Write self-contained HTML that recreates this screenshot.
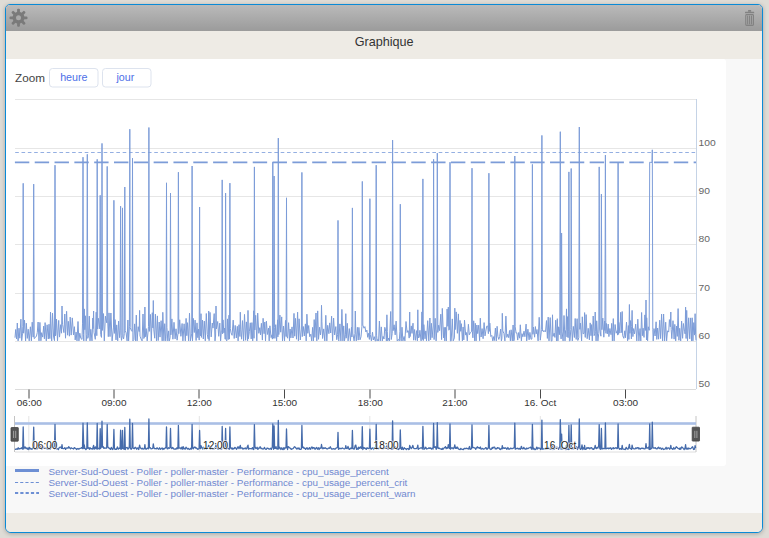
<!DOCTYPE html>
<html><head><meta charset="utf-8">
<style>
html,body{margin:0;padding:0;}
body{width:769px;height:538px;overflow:hidden;background:#dfdcd6;position:relative;font-family:"Liberation Sans",sans-serif;}
#panel{position:absolute;left:5px;top:4px;width:756px;height:527px;border:1px solid #0a8ad6;border-radius:5px 5px 6px 6px;overflow:hidden;background:#f8f8f8;box-shadow:0 1px 4px rgba(0,0,0,0.25);}
#hdr{position:absolute;left:0;top:0;width:756px;height:26px;background:linear-gradient(#bababa,#9b9b9b);}
#title{position:absolute;left:0;top:26px;width:756px;height:28px;background:#eeebe5;}
#box{position:absolute;left:0;top:54px;width:720px;height:407px;background:#fff;border-top-right-radius:3px;border-bottom-right-radius:3px;}
#foot{position:absolute;left:0;top:508px;width:756px;height:19px;background:#eeebe5;}
svg{position:absolute;left:0;top:0;}
</style></head><body>
<div id="panel">
 <div id="hdr"></div>
 <div id="title"></div>
 <div id="box"></div>
 <div id="foot"></div>
</div>
<svg width="769" height="538" viewBox="0 0 769 538" font-family="Liberation Sans, sans-serif">
 <!-- gear -->
 <g transform="translate(18.5,17.8)" fill="#7a7a7a">
  <circle r="6"/>
  <g id="teeth">
   <rect x="-1.4" y="-9" width="2.8" height="5" rx="1"/>
   <rect x="-1.4" y="-9" width="2.8" height="5" rx="1" transform="rotate(45)"/>
   <rect x="-1.4" y="-9" width="2.8" height="5" rx="1" transform="rotate(90)"/>
   <rect x="-1.4" y="-9" width="2.8" height="5" rx="1" transform="rotate(135)"/>
   <rect x="-1.4" y="-9" width="2.8" height="5" rx="1" transform="rotate(180)"/>
   <rect x="-1.4" y="-9" width="2.8" height="5" rx="1" transform="rotate(225)"/>
   <rect x="-1.4" y="-9" width="2.8" height="5" rx="1" transform="rotate(270)"/>
   <rect x="-1.4" y="-9" width="2.8" height="5" rx="1" transform="rotate(315)"/>
  </g>
  <circle r="2.5" fill="#a9a9a9"/>
 </g>
 <!-- trash -->
 <g fill="#828282">
  <rect x="748" y="10" width="3.2" height="1.8" rx="0.6"/>
  <rect x="745" y="11.8" width="9.2" height="1.5" rx="0.5"/>
  <rect x="745.75" y="14.6" width="7.7" height="10.8" rx="0.9" fill="none" stroke="#828282" stroke-width="1.1"/>
  <rect x="747.1" y="15.6" width="1.1" height="8.8"/>
  <rect x="749.05" y="15.6" width="1.1" height="8.8"/>
  <rect x="751" y="15.6" width="1.1" height="8.8"/>
 </g>
 <text x="384.2" y="46" font-size="12.6" fill="#333" text-anchor="middle">Graphique</text>
 <!-- zoom -->
 <text transform="translate(15,82) scale(1,0.9)" font-size="11.7" fill="#444">Zoom</text>
 <rect x="49.5" y="68.5" width="48.5" height="18.5" rx="3" fill="#fff" stroke="#dde3ee"/>
 <rect x="102.5" y="68.5" width="48.5" height="18.5" rx="3" fill="#fff" stroke="#dde3ee"/>
 <text x="73.8" y="81" font-size="10.7" fill="#4d6fe8" text-anchor="middle">heure</text>
 <text x="125.3" y="81" font-size="10.7" fill="#4d6fe8" text-anchor="middle">jour</text>
 <!-- grid -->
 <g stroke="#e6e6e6" stroke-width="1">
  <line x1="15" y1="99.5" x2="696" y2="99.5"/>
  <line x1="15" y1="148.5" x2="696" y2="148.5"/>
  <line x1="15" y1="196.5" x2="696" y2="196.5"/>
  <line x1="15" y1="244.5" x2="696" y2="244.5"/>
  <line x1="15" y1="293.5" x2="696" y2="293.5"/>
  <line x1="15" y1="341.5" x2="696" y2="341.5"/>
 </g>
 <line x1="15" y1="389.5" x2="696" y2="389.5" stroke="#dcdcdc"/>
 <line x1="696.5" y1="99" x2="696.5" y2="389" stroke="#c5d3e6"/>
 <g font-size="10" fill="#666">
  <text transform="translate(698.5,146.3) scale(1.03,0.88)">100</text>
  <text transform="translate(698.5,194) scale(1.03,0.88)">90</text>
  <text transform="translate(698.5,242.2) scale(1.03,0.88)">80</text>
  <text transform="translate(698.5,290.5) scale(1.03,0.88)">70</text>
  <text transform="translate(698.5,338.7) scale(1.03,0.88)">60</text>
  <text transform="translate(698.5,386.8) scale(1.03,0.88)">50</text>
 </g>
 <g stroke="#4a4a4a" stroke-width="1">
  <line x1="29" y1="389.5" x2="29" y2="398.5"/>
  <line x1="114" y1="389.5" x2="114" y2="398.5"/>
  <line x1="199" y1="389.5" x2="199" y2="398.5"/>
  <line x1="284.5" y1="389.5" x2="284.5" y2="398.5"/>
  <line x1="370" y1="389.5" x2="370" y2="398.5"/>
  <line x1="455" y1="389.5" x2="455" y2="398.5"/>
  <line x1="540.5" y1="389.5" x2="540.5" y2="398.5"/>
  <line x1="625.5" y1="389.5" x2="625.5" y2="398.5"/>
 </g>
 <g font-size="10" fill="#333" text-anchor="middle" transform="translate(0,405.7) scale(1,0.94)">
  <text x="29.3" y="0">06:00</text>
  <text x="114" y="0">09:00</text>
  <text x="199.3" y="0">12:00</text>
  <text x="284.7" y="0">15:00</text>
  <text x="370.3" y="0">18:00</text>
  <text x="454.8" y="0">21:00</text>
  <text x="540.3" y="0">16. Oct</text>
  <text x="625.6" y="0">03:00</text>
 </g>
 <!-- thresholds -->
 <line x1="15.2" y1="152.5" x2="696" y2="152.5" stroke="#94afe2" stroke-width="1" stroke-dasharray="3.62 2.701"/>
 <line x1="14.9" y1="162.4" x2="646" y2="162.4" stroke="#7c9cd8" stroke-width="1.8" stroke-dasharray="14.4 5.42"/>
 <line x1="654" y1="162.4" x2="696" y2="162.4" stroke="#7c9cd8" stroke-width="1.8" stroke-dasharray="14.4 5.42"/>
 <path d="M15.0 337.7 L15.7 329.5 L16.6 338.9 L17.3 323.0 L18.1 340.9 L19.0 328.2 L19.8 338.2 L20.9 319.2 L21.7 340.7 L22.5 333.8 L22.8 326.3 L23.2 183.3 L23.6 333.2 L24.5 320.1 L25.6 340.9 L26.3 323.2 L27.3 338.4 L28.2 329.2 L29.2 340.9 L30.4 326.8 L31.4 340.9 L32.2 322.2 L33.2 337.1 L33.7 184.1 L34.2 338.6 L35.3 337.6 L36.5 336.0 L37.3 332.4 L38.1 322.0 L39.0 340.9 L39.9 322.4 L40.9 340.8 L41.6 332.7 L42.7 337.1 L43.7 326.1 L44.4 338.8 L45.1 322.6 L46.3 340.9 L47.1 324.8 L48.3 339.0 L49.0 324.2 L49.7 338.4 L50.0 338.7 L50.5 312.0 L51.0 328.0 L51.7 340.9 L52.5 313.1 L53.6 337.1 L54.5 340.7 L55.0 165.2 L55.5 335.9 L55.8 334.4 L56.5 319.1 L57.5 340.9 L58.7 320.4 L59.5 337.1 L60.7 324.7 L61.5 333.2 L62.0 306.0 L62.5 324.5 L62.8 325.9 L63.9 332.6 L64.8 314.0 L65.5 338.2 L66.6 311.3 L67.6 335.2 L68.3 321.3 L69.4 336.2 L70.2 317.1 L71.2 335.1 L72.3 317.9 L73.5 335.0 L74.4 326.7 L75.2 339.9 L76.1 332.1 L77.0 340.9 L78.0 321.5 L78.9 340.9 L79.8 333.2 L80.8 338.4 L82.0 339.4 L82.5 323.9 L83.0 157.2 L83.5 334.7 L83.8 340.9 L84.3 308.9 L84.8 329.7 L85.4 315.8 L86.2 340.9 L86.8 334.6 L87.3 154.3 L87.8 338.4 L88.5 335.8 L89.3 316.1 L90.0 340.9 L90.8 329.3 L92.0 340.9 L92.8 318.0 L93.1 328.6 L93.6 311.0 L94.0 332.2 L95.3 339.3 L96.2 312.2 L96.8 335.7 L97.2 159.3 L97.7 329.1 L98.4 318.3 L99.8 328.9 L100.2 195.3 L100.7 334.4 L101.1 336.3 L101.5 337.4 L102.0 143.4 L102.5 330.4 L103.5 313.6 L104.3 340.9 L105.4 316.2 L106.8 322.9 L107.2 166.4 L107.7 320.1 L108.3 336.7 L109.0 312.9 L110.0 336.6 L110.9 313.0 L112.1 340.9 L113.5 327.1 L113.9 200.3 L114.4 333.4 L115.1 319.6 L116.0 339.9 L116.7 324.9 L117.7 340.9 L118.6 321.1 L119.6 337.7 L120.1 330.3 L120.6 206.2 L121.0 335.3 L121.5 340.4 L122.0 337.2 L122.5 207.9 L123.0 336.6 L123.6 338.9 L124.3 333.5 L124.8 187.0 L125.2 330.4 L126.1 332.9 L127.1 340.9 L127.9 320.0 L128.6 340.9 L129.4 326.7 L129.8 129.2 L130.2 327.5 L131.3 330.4 L132.1 331.4 L132.5 158.2 L132.9 340.9 L133.9 339.6 L134.6 323.9 L135.5 340.9 L136.3 315.1 L137.1 340.9 L138.2 326.7 L139.2 331.6 L139.6 310.4 L140.0 336.1 L140.3 336.7 L141.0 338.9 L142.1 340.9 L143.0 314.0 L143.8 338.5 L144.5 337.1 L144.9 307.0 L145.3 336.8 L146.2 328.6 L147.2 340.9 L148.5 326.6 L148.9 127.5 L149.3 331.4 L150.4 314.4 L151.3 340.9 L152.3 312.7 L152.9 327.9 L153.3 300.5 L153.8 329.9 L154.7 338.2 L155.4 314.1 L156.5 340.9 L157.4 315.9 L158.2 340.6 L159.2 322.0 L160.0 337.1 L161.1 320.7 L162.2 340.9 L162.8 312.3 L163.9 340.8 L164.7 323.7 L165.7 340.9 L166.1 336.8 L166.5 182.8 L166.9 327.4 L167.8 340.9 L168.6 330.9 L169.3 340.9 L170.1 337.6 L170.5 193.1 L170.9 334.9 L171.9 318.9 L172.9 339.2 L174.0 322.3 L175.1 338.9 L176.0 328.8 L177.1 340.2 L178.0 333.4 L178.4 172.2 L178.8 333.7 L179.7 319.8 L180.9 336.3 L182.1 323.5 L182.9 340.9 L184.1 323.8 L185.3 340.9 L186.1 318.4 L186.8 335.7 L187.5 322.7 L188.6 340.9 L189.5 313.2 L190.4 340.9 L191.7 333.9 L192.1 166.0 L192.5 340.9 L193.3 318.4 L194.3 332.5 L195.1 320.1 L196.1 340.5 L197.0 322.9 L197.8 337.7 L198.5 329.2 L199.2 340.1 L199.6 207.0 L200.0 334.0 L200.6 335.8 L201.0 313.7 L201.4 337.4 L202.5 320.0 L203.3 339.0 L204.3 321.1 L205.3 340.9 L206.3 313.5 L207.3 334.5 L208.2 338.9 L208.7 311.0 L209.1 340.7 L210.0 312.4 L211.2 336.9 L212.3 323.0 L213.0 328.1 L214.2 313.6 L215.0 340.9 L215.6 335.0 L216.0 306.0 L216.4 328.9 L217.7 321.5 L218.7 336.3 L219.8 323.1 L220.6 340.9 L221.4 330.9 L221.8 330.1 L222.2 179.9 L222.6 333.8 L223.0 319.9 L223.9 332.8 L224.6 328.0 L225.2 339.1 L225.6 193.1 L226.0 339.4 L226.8 340.9 L227.5 318.9 L228.2 339.6 L229.0 315.2 L229.5 339.1 L229.9 183.1 L230.3 328.4 L231.0 332.8 L232.1 335.3 L233.2 320.1 L234.2 338.5 L235.2 325.4 L236.3 338.0 L237.3 326.3 L238.1 340.9 L239.0 324.7 L239.9 336.5 L240.3 312.2 L240.8 329.8 L241.6 339.2 L242.5 320.6 L243.6 340.9 L244.5 314.4 L245.6 340.3 L246.4 321.9 L247.6 340.9 L248.0 310.4 L248.4 338.8 L249.4 331.4 L250.3 322.8 L251.2 338.9 L251.9 322.6 L252.7 340.9 L253.7 310.8 L254.0 338.3 L254.4 166.9 L254.8 330.0 L255.7 315.3 L256.8 340.9 L257.7 313.1 L258.8 333.3 L259.8 327.7 L260.5 334.8 L261.4 323.3 L262.4 340.1 L263.1 318.3 L264.1 333.7 L264.8 322.0 L265.5 340.9 L266.4 321.2 L267.4 334.5 L268.5 328.1 L269.2 340.9 L269.9 325.8 L271.1 337.6 L272.0 334.8 L272.4 339.1 L272.8 162.2 L273.2 338.4 L273.7 336.6 L274.1 176.0 L274.6 327.5 L274.9 338.4 L275.7 324.7 L276.6 340.9 L277.6 319.8 L277.9 336.9 L278.3 138.1 L278.8 334.6 L279.9 315.1 L280.7 332.2 L281.7 316.9 L282.5 340.9 L283.5 326.0 L284.5 340.9 L285.5 320.4 L286.1 336.5 L286.5 197.8 L286.9 336.1 L287.6 338.2 L288.6 322.7 L289.5 340.9 L290.1 329.0 L290.9 337.9 L292.0 326.9 L293.0 338.0 L294.0 313.4 L294.7 336.2 L295.5 318.4 L296.5 339.2 L297.6 312.2 L298.4 340.9 L299.1 318.8 L300.3 340.0 L301.4 329.1 L301.9 172.4 L302.3 336.6 L303.3 326.5 L304.3 336.0 L305.4 323.9 L306.2 340.9 L306.9 314.2 L307.8 333.3 L308.7 325.5 L309.7 336.7 L310.8 334.2 L311.7 340.9 L312.6 327.4 L313.4 340.9 L314.2 319.6 L314.9 337.4 L316.0 313.0 L316.8 340.9 L317.7 310.9 L318.5 339.3 L319.6 327.2 L320.5 335.0 L321.1 329.0 L321.5 305.3 L321.9 321.7 L322.6 338.5 L323.7 328.9 L324.8 340.9 L325.8 315.3 L326.8 340.9 L327.7 325.3 L328.9 333.7 L329.7 322.9 L330.7 333.0 L331.6 316.2 L332.6 340.7 L333.6 318.0 L334.6 335.0 L335.8 326.6 L336.7 339.7 L337.6 334.7 L338.0 220.4 L338.4 339.4 L338.8 340.9 L339.9 323.9 L340.9 340.9 L341.9 309.4 L342.9 340.9 L343.7 325.9 L344.5 340.9 L345.4 334.7 L345.8 313.7 L346.2 338.2 L347.3 323.3 L348.1 340.9 L349.3 328.6 L350.4 340.8 L351.5 327.2 L351.9 337.0 L352.4 207.9 L352.8 333.1 L354.1 340.9 L354.9 333.6 L355.3 311.0 L355.8 334.7 L356.3 340.9 L357.4 327.3 L358.2 340.1 L358.9 327.4 L360.0 339.8 L361.0 336.8 L361.9 326.7 L362.3 181.4 L362.8 325.1 L364.0 328.2 L364.9 326.6 L365.9 332.0 L366.9 330.1 L367.7 337.3 L368.6 333.3 L369.4 339.4 L369.9 198.7 L370.3 334.7 L371.4 340.9 L372.5 332.2 L373.3 340.0 L374.3 336.7 L375.2 340.9 L375.8 340.9 L376.2 165.2 L376.6 335.2 L377.1 340.9 L377.8 339.4 L378.6 340.9 L379.4 321.0 L380.3 340.9 L381.3 326.9 L382.3 340.9 L383.1 336.4 L384.0 339.0 L384.8 327.3 L385.8 331.5 L386.4 340.9 L386.9 314.8 L387.3 331.5 L387.7 340.9 L388.8 338.0 L389.5 340.9 L390.7 311.5 L391.3 339.5 L392.2 333.4 L392.6 140.1 L393.1 330.7 L394.1 324.8 L395.2 334.9 L396.1 321.1 L397.2 340.9 L398.3 339.4 L399.3 340.9 L399.9 331.3 L400.3 204.2 L400.8 338.4 L401.2 340.9 L402.0 327.2 L402.9 340.9 L404.1 336.5 L404.9 340.9 L406.0 321.5 L407.1 332.5 L407.9 330.5 L408.6 332.1 L409.2 338.1 L409.7 312.0 L410.1 336.6 L411.3 325.9 L412.0 333.4 L413.0 323.2 L413.7 340.2 L414.6 329.5 L415.5 340.3 L416.7 330.6 L417.4 340.9 L417.8 309.8 L418.2 333.4 L418.5 338.0 L419.2 337.2 L419.9 330.3 L421.1 340.9 L421.9 311.9 L422.4 339.4 L422.9 178.9 L423.3 340.6 L423.8 324.6 L425.0 338.8 L425.8 330.9 L426.5 340.9 L427.7 320.7 L428.8 340.9 L429.9 318.0 L430.6 339.8 L431.4 323.3 L432.1 337.7 L433.2 326.0 L433.6 159.3 L434.1 339.6 L435.2 318.3 L436.1 340.9 L436.9 329.1 L437.3 153.1 L437.8 332.4 L438.7 325.2 L439.6 330.7 L440.8 314.2 L441.6 339.6 L442.3 308.4 L443.5 337.8 L444.2 327.3 L444.8 340.9 L445.5 327.4 L446.4 340.9 L447.1 309.1 L447.9 326.3 L448.3 307.1 L448.8 330.2 L449.6 329.3 L450.0 162.2 L450.4 340.9 L451.2 340.9 L452.3 318.9 L453.2 340.9 L454.4 337.9 L454.8 308.2 L455.2 329.6 L456.2 311.9 L457.4 333.3 L458.4 313.9 L459.3 340.6 L460.0 320.4 L460.7 331.3 L461.4 323.7 L462.4 340.9 L463.1 327.0 L463.8 339.9 L464.5 320.2 L465.7 335.1 L466.4 332.5 L467.3 340.9 L468.4 324.3 L469.3 334.8 L470.4 332.5 L471.6 331.6 L472.0 168.2 L472.4 331.7 L472.9 337.8 L473.7 320.8 L474.7 340.9 L475.3 323.3 L476.1 340.9 L476.9 325.0 L477.7 333.6 L478.7 325.2 L479.6 340.7 L480.3 318.2 L481.1 337.0 L482.1 328.6 L483.1 338.7 L484.1 322.6 L485.0 335.9 L485.8 331.1 L486.7 326.2 L487.8 326.1 L488.4 333.7 L488.9 173.2 L489.3 331.4 L489.8 323.1 L490.8 336.5 L491.8 335.4 L492.8 340.9 L493.7 336.6 L494.4 340.5 L495.4 328.1 L496.3 340.9 L497.1 326.3 L497.9 336.3 L498.8 339.4 L499.7 336.4 L500.6 329.1 L501.4 340.9 L501.9 338.3 L502.3 313.3 L502.8 330.9 L504.0 333.7 L504.9 340.9 L505.9 316.1 L506.8 337.4 L507.8 334.1 L508.7 337.7 L509.5 330.5 L510.4 340.9 L511.1 329.8 L512.3 340.9 L513.1 325.0 L513.8 340.9 L514.3 339.0 L514.8 156.0 L515.2 326.8 L516.1 333.2 L516.9 332.8 L517.7 340.1 L518.7 332.5 L519.6 338.2 L520.3 324.8 L521.4 340.9 L522.0 333.7 L522.9 336.8 L524.0 331.2 L524.9 336.7 L526.1 324.1 L526.7 340.9 L527.9 329.2 L529.1 339.8 L529.9 332.4 L531.0 339.3 L531.9 338.9 L532.4 164.4 L532.9 334.3 L533.5 327.0 L534.6 337.2 L535.4 326.6 L536.2 333.9 L537.0 329.5 L538.1 340.9 L539.2 317.3 L540.3 340.2 L541.1 333.0 L541.4 329.5 L541.9 135.4 L542.4 331.1 L542.8 330.1 L543.8 331.9 L544.8 330.6 L545.5 331.7 L546.5 320.6 L547.4 338.4 L548.2 317.1 L549.0 340.9 L550.2 317.6 L551.2 340.9 L552.0 340.9 L552.5 314.8 L553.0 336.4 L554.2 333.1 L554.9 337.4 L555.7 320.2 L556.5 340.9 L557.3 318.7 L557.9 340.9 L558.6 326.8 L559.4 334.7 L559.8 326.2 L560.3 131.7 L560.8 333.8 L561.1 338.9 L561.6 233.0 L562.1 331.9 L563.1 340.9 L564.0 315.5 L565.0 340.9 L565.6 330.3 L566.0 329.6 L566.5 308.9 L567.0 336.9 L567.4 316.6 L568.1 337.7 L568.4 331.2 L568.9 171.9 L569.4 340.9 L570.0 340.9 L570.8 329.4 L571.2 168.5 L571.7 327.8 L572.3 340.9 L573.3 326.4 L574.4 337.5 L575.2 318.5 L576.2 339.4 L577.1 318.7 L577.8 340.5 L578.8 337.6 L579.3 127.0 L579.8 329.3 L580.4 323.1 L581.6 340.9 L582.3 316.8 L583.1 333.8 L584.1 333.3 L584.6 312.6 L585.1 336.0 L585.3 337.4 L586.1 314.6 L587.2 338.7 L588.2 328.3 L589.4 339.9 L590.2 322.9 L591.0 335.7 L591.6 324.6 L592.3 340.9 L593.2 316.0 L594.1 335.7 L594.8 333.3 L595.2 312.0 L595.7 331.7 L596.1 340.9 L596.7 320.8 L597.9 340.9 L598.8 333.3 L599.2 166.9 L599.7 329.0 L600.9 336.2 L601.4 194.1 L601.9 329.7 L602.8 318.1 L603.8 337.2 L604.7 321.0 L604.9 330.4 L605.4 155.1 L605.9 333.3 L606.3 323.4 L607.3 333.9 L608.2 324.1 L608.9 336.6 L609.9 328.5 L611.0 334.7 L611.7 323.4 L612.4 340.9 L613.3 318.6 L614.1 340.9 L615.1 324.5 L616.2 333.2 L617.3 330.5 L617.6 335.1 L618.1 162.2 L618.6 334.4 L618.8 322.4 L619.9 333.0 L620.7 312.3 L621.8 332.7 L622.2 311.5 L622.7 335.7 L623.8 338.3 L624.8 330.8 L625.4 337.8 L626.5 322.2 L627.6 340.9 L628.4 325.6 L628.9 339.4 L629.4 304.5 L629.9 333.3 L630.5 320.6 L631.4 338.9 L631.6 326.6 L632.1 310.4 L632.6 331.8 L632.9 336.6 L633.6 328.6 L634.5 333.9 L635.7 324.1 L636.8 340.9 L637.8 319.2 L638.9 340.9 L640.0 328.6 L640.8 340.9 L641.6 312.5 L642.4 335.7 L643.1 328.2 L644.0 337.4 L644.9 314.9 L645.5 330.4 L646.0 300.0 L646.5 340.0 L646.7 317.8 L647.6 340.9 L648.3 326.8 L649.2 330.3 L649.7 162.2 L650.9 162.4 L652.0 162.4 L652.3 149.8 L652.8 329.4 L653.2 340.9 L654.0 328.6 L655.1 336.0 L656.1 321.8 L656.8 339.4 L657.6 328.0 L658.6 339.2 L659.7 320.2 L660.6 338.6 L661.6 314.1 L662.6 340.9 L663.6 314.0 L664.6 340.9 L665.7 322.2 L666.6 340.9 L667.5 330.8 L668.7 332.1 L669.4 319.6 L670.3 326.8 L670.8 312.0 L671.2 329.4 L671.8 338.6 L673.0 320.7 L674.1 339.1 L674.8 324.4 L675.7 340.9 L676.6 326.0 L677.3 336.4 L678.1 308.6 L678.9 340.3 L679.7 328.3 L680.7 340.9 L681.6 321.1 L682.6 338.3 L683.4 323.5 L684.5 331.4 L685.1 333.9 L685.6 307.1 L686.1 338.5 L686.7 310.4 L687.5 340.9 L688.7 317.8 L689.7 338.8 L690.6 317.9 L691.5 340.9 L692.2 317.8 L692.9 340.9 L693.8 322.6 L694.6 335.1 L695.1 313.7 L695.6 334.3 L696.0 340.4" fill="none" stroke="#7c9cd8" stroke-width="1" stroke-linejoin="round"/>
 <!-- navigator -->
 <g stroke="#e4e4e4" stroke-width="1">
  <line x1="28.8" y1="416" x2="28.8" y2="452"/>
  <line x1="199.3" y1="416" x2="199.3" y2="452"/>
  <line x1="369.8" y1="416" x2="369.8" y2="452"/>
  <line x1="540.3" y1="416" x2="540.3" y2="452"/>
 </g>
 <line x1="15" y1="452" x2="696" y2="452" stroke="#dedede"/>
 <line x1="14.5" y1="416" x2="14.5" y2="452" stroke="#c4c4c4"/>
 <line x1="696" y1="416" x2="696" y2="452" stroke="#c4c4c4"/>
 <rect x="15" y="422.2" width="681" height="2.6" fill="#aabfe5"/>
 <path d="M15.0 449.1 L15.8 449.4 L16.3 448.8 L17.2 449.3 L18.2 447.8 L18.8 449.1 L19.5 448.6 L20.5 448.5 L21.1 448.6 L21.8 447.8 L22.7 449.1 L23.2 427.0 L23.7 448.8 L25.0 446.9 L25.9 448.5 L26.5 448.0 L27.3 449.2 L28.0 447.9 L28.8 449.5 L29.5 447.4 L30.4 448.8 L31.1 448.6 L31.9 449.4 L32.6 447.9 L33.2 448.2 L33.7 427.1 L34.2 448.3 L35.1 449.3 L36.1 449.0 L36.8 448.3 L37.5 448.7 L38.4 446.9 L39.0 448.0 L39.8 447.7 L40.6 446.8 L41.5 449.3 L42.4 448.5 L43.0 448.1 L43.6 447.0 L44.6 448.4 L45.2 448.1 L46.1 447.7 L47.0 448.8 L47.6 447.5 L48.2 449.2 L48.8 448.6 L50.0 449.3 L50.5 445.4 L51.0 447.6 L51.9 447.5 L52.6 447.0 L53.5 447.7 L54.5 448.9 L55.0 424.4 L55.5 448.5 L56.1 448.3 L56.8 448.9 L57.5 448.6 L58.4 449.5 L59.0 448.0 L59.9 447.2 L60.9 447.2 L61.5 448.4 L62.0 444.6 L62.5 448.3 L63.5 448.7 L64.1 448.5 L64.8 447.8 L65.6 449.4 L66.2 448.1 L67.2 448.0 L68.1 448.2 L68.7 446.7 L69.5 447.8 L70.5 448.7 L71.3 447.8 L72.1 448.3 L72.7 448.5 L73.6 449.0 L74.3 447.6 L74.9 448.1 L75.7 448.3 L76.5 449.5 L77.0 448.9 L77.9 448.5 L78.5 449.2 L79.2 448.9 L80.0 448.3 L81.0 448.1 L81.7 447.6 L82.5 448.6 L83.0 423.2 L83.8 448.5 L84.3 445.0 L84.8 448.4 L85.2 448.6 L85.9 449.5 L86.8 448.4 L87.3 422.8 L87.8 448.3 L88.5 447.8 L89.4 449.2 L90.0 447.6 L90.9 448.8 L91.7 448.7 L92.6 449.1 L93.1 447.2 L93.6 445.3 L94.1 449.2 L94.7 449.0 L95.3 446.8 L96.1 448.4 L96.7 448.9 L97.2 423.5 L97.7 449.0 L98.7 448.3 L99.7 449.1 L100.2 428.7 L100.7 448.3 L101.5 446.4 L102.0 421.2 L102.5 447.2 L103.2 446.6 L103.9 448.4 L104.7 448.0 L105.5 448.2 L106.7 448.1 L107.2 424.5 L107.7 446.6 L108.6 447.8 L109.6 448.3 L110.4 449.4 L111.3 447.4 L112.2 449.3 L112.8 449.5 L113.4 447.3 L113.9 429.4 L114.4 448.1 L114.9 449.3 L115.9 449.2 L116.5 449.4 L117.4 446.9 L118.3 449.2 L119.2 448.2 L120.1 448.5 L120.6 430.2 L121.1 449.4 L121.6 448.9 L122.0 448.1 L122.5 430.5 L123.0 448.6 L124.3 449.2 L124.8 427.5 L125.3 449.5 L125.7 448.2 L126.4 447.6 L127.2 447.5 L128.0 449.2 L128.8 448.2 L129.3 446.3 L129.8 419.2 L130.3 448.1 L131.2 449.3 L132.0 447.8 L132.5 423.4 L133.0 448.1 L133.8 448.5 L134.5 448.6 L135.1 447.4 L135.8 447.5 L136.7 449.2 L137.3 448.3 L138.0 447.9 L138.7 449.5 L139.1 448.0 L139.6 445.2 L140.1 447.4 L140.9 448.4 L141.7 448.9 L142.3 448.3 L143.0 449.0 L144.0 448.9 L144.4 448.4 L144.9 444.7 L145.4 448.9 L146.5 449.0 L147.5 448.1 L148.4 448.8 L148.9 419.0 L149.4 447.8 L150.2 447.7 L151.1 448.8 L151.8 448.7 L152.8 448.4 L153.3 443.8 L153.8 447.3 L154.5 448.6 L155.5 448.7 L156.3 448.8 L157.0 447.8 L157.9 448.7 L158.7 449.2 L159.6 447.8 L160.5 449.3 L161.5 448.5 L162.1 447.9 L162.9 449.5 L163.7 448.5 L164.5 448.8 L165.4 447.8 L166.0 447.2 L166.5 426.9 L167.0 448.6 L167.8 448.8 L168.6 447.7 L169.5 448.3 L170.0 447.8 L170.5 428.4 L171.0 447.2 L171.8 448.6 L172.7 447.4 L173.6 448.9 L174.6 449.2 L175.4 448.8 L176.1 449.1 L176.9 447.8 L177.9 448.8 L178.4 425.4 L178.9 448.1 L179.7 448.2 L180.3 447.9 L181.0 449.0 L181.9 447.1 L182.6 449.2 L183.2 446.7 L183.9 448.9 L184.6 448.4 L185.3 449.0 L186.0 447.1 L186.6 447.8 L187.5 449.0 L188.4 448.4 L189.0 449.2 L189.9 449.5 L190.7 448.3 L191.6 449.1 L192.1 424.5 L192.6 447.7 L193.4 448.8 L194.0 447.4 L194.9 447.0 L195.7 448.1 L196.5 447.9 L197.1 448.8 L197.7 449.3 L198.6 448.9 L199.1 448.7 L199.6 430.4 L200.1 447.1 L200.5 448.7 L201.0 445.7 L201.5 446.9 L202.6 449.0 L203.5 447.3 L204.2 449.4 L204.9 447.6 L205.5 447.8 L206.3 449.3 L207.1 448.2 L208.2 446.5 L208.7 445.3 L209.2 446.4 L210.2 449.3 L211.0 448.9 L211.7 447.7 L212.6 449.4 L213.2 449.2 L214.0 449.4 L215.0 447.4 L215.5 448.3 L216.0 444.6 L216.5 447.5 L217.6 448.8 L218.5 449.0 L219.0 448.9 L219.9 448.2 L220.5 449.1 L221.2 447.5 L221.7 449.1 L222.2 426.5 L222.7 446.6 L223.6 447.5 L224.6 448.5 L225.1 448.6 L225.6 428.4 L226.1 449.2 L226.8 448.2 L227.6 448.4 L228.5 448.7 L229.4 449.2 L229.9 426.9 L230.4 447.6 L231.4 448.8 L232.0 447.7 L232.8 449.3 L233.4 448.5 L234.2 448.7 L234.9 447.4 L235.8 448.1 L236.6 449.3 L237.4 447.9 L238.1 446.7 L239.0 448.6 L239.8 446.9 L240.3 445.4 L240.8 448.5 L241.3 447.9 L242.2 447.8 L243.0 449.2 L243.7 448.3 L244.4 448.6 L245.3 448.0 L246.1 449.0 L246.9 448.3 L247.5 446.2 L248.0 445.2 L248.5 449.2 L249.4 448.5 L250.4 448.6 L251.3 448.6 L251.9 448.8 L252.5 447.6 L253.3 449.5 L253.9 449.2 L254.4 424.6 L254.9 446.4 L255.8 448.6 L256.4 448.3 L257.1 447.3 L257.9 449.4 L258.5 448.1 L259.4 448.2 L260.1 446.7 L261.1 448.6 L261.8 448.3 L262.4 448.9 L263.2 449.1 L263.9 448.5 L264.4 447.4 L265.4 449.2 L266.4 449.3 L267.1 448.0 L268.0 448.3 L268.6 448.9 L269.3 449.2 L269.8 448.9 L270.7 448.3 L271.3 449.4 L272.3 447.0 L272.8 423.9 L273.6 449.3 L274.1 425.9 L274.6 448.3 L275.3 448.4 L276.0 446.7 L276.6 448.9 L277.2 448.7 L277.8 449.1 L278.3 420.5 L278.8 448.9 L279.6 447.3 L280.2 448.0 L280.9 449.5 L281.8 447.8 L282.5 449.3 L283.2 449.5 L283.8 447.6 L284.4 449.1 L285.1 447.9 L286.0 447.9 L286.5 429.0 L287.0 446.0 L287.6 449.5 L288.1 446.6 L289.1 447.3 L289.6 447.9 L290.6 448.3 L291.2 449.4 L292.1 448.9 L293.0 448.6 L293.6 448.0 L294.5 446.7 L295.4 447.2 L296.0 448.3 L296.8 449.0 L297.4 448.1 L298.3 448.9 L298.9 447.9 L299.8 449.4 L300.6 449.3 L301.4 448.9 L301.9 425.4 L302.4 447.5 L303.5 447.1 L304.0 448.4 L305.0 448.2 L305.6 449.4 L306.4 448.3 L307.0 447.7 L308.0 449.3 L308.6 448.7 L309.5 447.6 L310.1 449.3 L310.8 449.0 L311.4 447.2 L312.2 447.1 L312.8 448.7 L313.4 447.6 L314.2 447.7 L315.0 449.3 L315.8 448.3 L316.6 447.4 L317.5 449.2 L318.5 447.8 L319.1 449.5 L319.9 448.0 L321.0 448.4 L321.5 444.5 L322.0 447.3 L323.0 448.8 L323.7 447.8 L324.3 448.4 L325.2 447.7 L326.1 448.4 L327.1 449.0 L328.0 448.6 L328.8 447.9 L329.3 448.3 L330.3 446.8 L331.0 448.3 L331.9 449.2 L332.8 448.9 L333.8 448.6 L334.4 449.1 L335.2 449.1 L336.2 448.0 L337.1 447.7 L337.5 447.0 L338.0 432.3 L338.5 449.3 L339.7 448.2 L340.3 448.6 L341.0 448.4 L341.7 448.6 L342.5 448.0 L343.3 448.5 L344.2 449.0 L345.3 448.5 L345.8 445.7 L346.3 448.4 L347.2 448.6 L348.0 446.4 L348.9 449.1 L349.7 449.4 L350.4 448.2 L351.0 448.4 L351.9 448.7 L352.4 430.5 L352.9 448.0 L353.4 448.8 L354.3 449.1 L354.8 447.2 L355.3 445.3 L355.8 445.1 L356.6 449.3 L357.2 448.1 L358.1 449.4 L358.7 447.2 L359.6 448.3 L360.5 446.9 L361.4 448.5 L361.8 447.8 L362.3 426.7 L362.8 449.5 L363.8 447.5 L364.6 448.3 L365.2 448.1 L366.2 449.4 L367.0 447.7 L367.7 448.4 L368.6 448.5 L369.4 448.1 L369.9 429.2 L370.4 448.4 L371.4 449.1 L372.2 448.0 L373.1 448.1 L373.8 449.5 L374.4 447.6 L375.1 448.4 L375.7 447.3 L376.2 424.4 L376.7 449.1 L377.2 448.2 L378.0 448.2 L378.6 449.0 L379.4 447.8 L380.2 447.9 L380.8 447.8 L381.4 447.9 L382.1 448.9 L382.7 448.4 L383.4 448.7 L384.2 448.1 L384.8 448.3 L385.6 447.2 L386.4 448.4 L386.9 445.8 L387.4 448.7 L388.1 449.1 L388.7 448.6 L389.7 448.4 L390.3 448.2 L391.3 449.3 L392.1 448.9 L392.6 420.8 L393.1 448.8 L394.2 446.8 L395.0 446.9 L395.6 447.3 L396.4 448.4 L396.9 449.2 L397.7 448.3 L398.4 449.5 L399.2 448.5 L399.8 448.6 L400.3 430.0 L400.8 447.6 L401.7 449.4 L402.3 447.2 L402.9 449.1 L403.5 449.5 L404.2 447.6 L404.8 448.3 L405.4 448.5 L406.4 449.5 L407.1 448.6 L408.1 448.6 L408.8 449.5 L409.2 449.3 L409.7 445.4 L410.2 446.9 L411.2 448.6 L412.1 447.5 L412.8 445.4 L413.5 447.8 L414.2 448.7 L414.9 448.6 L415.6 448.7 L416.3 448.5 L417.3 447.7 L417.8 445.1 L418.3 449.3 L419.2 448.5 L420.2 448.1 L420.8 447.9 L421.7 447.8 L422.4 449.0 L422.9 426.3 L423.4 445.5 L424.0 449.3 L425.0 448.3 L425.8 447.2 L426.5 449.0 L427.5 448.7 L428.4 448.4 L429.0 447.8 L429.7 448.4 L430.7 447.9 L431.5 449.1 L432.4 448.1 L433.1 449.0 L433.6 423.5 L434.1 447.4 L434.6 447.3 L435.5 446.8 L436.2 449.3 L436.8 447.3 L437.3 422.6 L437.8 447.3 L438.2 448.5 L439.0 447.9 L439.8 448.7 L440.6 448.8 L441.5 449.4 L442.4 448.3 L442.9 449.4 L443.8 448.3 L444.6 447.6 L445.5 446.6 L446.2 448.7 L446.8 447.6 L447.8 448.2 L448.3 444.7 L448.8 447.0 L449.5 448.5 L450.0 423.9 L450.5 449.2 L451.3 447.9 L451.8 448.0 L452.6 447.9 L453.2 448.9 L454.3 447.2 L454.8 444.9 L455.3 448.4 L456.1 447.3 L456.7 448.4 L457.4 447.1 L458.4 448.8 L459.2 449.4 L460.2 449.5 L460.8 448.4 L461.5 449.2 L462.4 449.3 L463.3 449.5 L464.2 448.5 L464.9 448.4 L465.8 448.6 L466.4 448.2 L467.0 448.5 L467.7 448.6 L468.3 449.1 L468.9 448.2 L469.5 446.5 L470.1 449.4 L470.8 449.2 L471.5 448.6 L472.0 424.8 L472.5 447.6 L473.5 447.5 L474.4 447.9 L475.1 448.2 L475.8 449.3 L476.5 447.8 L477.3 446.8 L477.9 447.8 L478.6 447.5 L479.5 448.3 L480.4 447.0 L481.0 449.0 L481.9 448.8 L482.8 448.4 L483.4 449.1 L484.2 448.9 L484.9 448.7 L485.7 447.6 L486.3 447.8 L487.0 449.4 L487.9 448.0 L488.4 448.2 L488.9 425.5 L489.4 447.7 L490.0 448.9 L490.9 449.5 L491.6 449.0 L492.2 447.4 L492.8 448.3 L493.8 447.1 L494.6 447.1 L495.3 448.9 L496.0 448.6 L496.8 448.8 L497.4 447.6 L498.1 448.2 L499.0 447.9 L499.7 449.2 L500.3 449.5 L501.0 448.6 L501.8 448.8 L502.3 445.6 L502.8 448.5 L503.7 447.9 L504.5 448.4 L505.3 447.8 L506.2 448.4 L506.9 449.3 L507.9 447.5 L508.5 449.0 L509.2 449.0 L509.8 449.0 L510.8 448.1 L511.6 448.7 L512.4 448.6 L513.3 448.2 L514.3 447.7 L514.8 423.1 L515.3 449.2 L516.2 448.6 L517.1 448.3 L517.7 448.2 L518.3 449.0 L518.9 448.8 L519.5 448.4 L520.2 449.4 L520.8 448.4 L521.4 446.3 L522.1 448.6 L523.1 448.8 L523.8 447.4 L524.5 448.8 L525.3 448.8 L525.9 449.3 L526.5 448.1 L527.4 448.6 L528.1 448.5 L528.9 447.9 L529.9 447.5 L530.6 447.2 L531.2 448.5 L531.9 449.3 L532.4 424.3 L532.9 446.8 L533.4 449.1 L533.9 448.4 L534.9 449.5 L535.9 449.3 L536.8 447.1 L537.5 449.0 L538.2 447.9 L538.9 448.1 L539.9 448.1 L540.6 449.4 L541.4 448.8 L541.9 420.1 L542.4 449.2 L543.1 449.2 L544.0 448.5 L544.7 449.1 L545.5 449.4 L546.1 447.4 L546.9 449.3 L547.6 447.2 L548.6 447.5 L549.2 449.2 L550.1 448.6 L551.0 449.3 L551.6 447.8 L552.0 447.3 L552.5 445.8 L553.0 449.5 L554.0 449.2 L554.6 448.9 L555.2 448.0 L555.9 447.1 L556.6 448.3 L557.1 447.3 L557.8 448.0 L558.5 449.4 L559.8 446.4 L560.3 419.6 L561.1 449.3 L561.6 434.1 L562.1 447.3 L562.9 449.2 L563.7 447.6 L564.6 447.8 L565.4 449.4 L566.0 449.5 L566.5 445.0 L567.0 449.4 L567.9 447.8 L568.4 449.5 L568.9 425.3 L569.4 449.2 L569.8 448.9 L570.7 447.2 L571.2 424.8 L571.7 449.2 L572.9 448.0 L573.8 448.9 L574.7 448.1 L575.6 448.2 L576.6 446.8 L577.4 449.5 L578.3 447.6 L578.8 445.7 L579.3 418.9 L579.8 448.2 L580.5 449.4 L581.3 448.8 L582.0 444.9 L582.8 449.5 L583.7 447.8 L584.1 448.9 L584.6 445.5 L585.1 449.4 L586.3 449.1 L587.0 447.5 L587.9 448.4 L588.9 447.6 L589.8 448.8 L590.6 447.8 L591.6 447.6 L592.3 449.0 L593.0 448.9 L593.7 449.4 L594.7 447.6 L595.2 445.4 L595.7 448.0 L596.4 448.6 L597.0 447.5 L597.9 448.1 L598.7 445.5 L599.2 424.6 L599.7 448.2 L600.4 449.3 L600.9 448.3 L601.4 428.5 L601.9 449.0 L602.6 448.8 L603.2 448.4 L604.1 448.7 L604.9 448.5 L605.4 422.9 L605.9 448.8 L606.6 448.5 L607.3 448.4 L608.0 448.0 L608.8 448.7 L609.5 448.1 L610.1 448.3 L610.8 447.8 L611.5 449.4 L612.5 448.4 L613.2 447.6 L613.9 448.8 L614.7 448.2 L615.3 448.1 L616.1 447.7 L616.9 448.7 L617.6 448.3 L618.1 423.9 L618.6 447.5 L619.5 449.3 L620.4 448.6 L621.3 449.3 L621.7 448.3 L622.2 445.3 L622.7 449.0 L623.7 449.2 L624.7 449.4 L625.3 449.5 L626.2 447.3 L627.0 448.8 L628.0 449.2 L628.9 446.6 L629.4 444.3 L629.9 448.3 L630.3 448.5 L631.0 448.7 L631.6 449.3 L632.1 445.2 L632.6 447.7 L633.5 448.7 L634.3 448.9 L635.1 448.9 L635.9 447.8 L636.8 448.6 L637.5 447.7 L638.2 447.6 L638.9 449.1 L639.6 448.3 L640.5 449.0 L641.0 448.4 L641.9 448.2 L642.6 448.5 L643.2 448.2 L644.1 448.9 L645.1 448.8 L645.5 447.7 L646.0 443.7 L646.5 448.0 L647.6 448.0 L648.5 447.2 L649.2 449.5 L649.7 423.9 L650.2 449.3 L651.0 448.3 L651.8 448.6 L652.3 422.2 L652.8 446.8 L653.6 448.2 L654.4 448.1 L655.3 447.7 L656.2 448.7 L657.0 449.0 L657.6 448.1 L658.6 447.2 L659.3 448.6 L659.9 448.1 L660.8 447.9 L661.3 449.4 L661.9 448.8 L662.7 448.2 L663.4 449.5 L664.4 449.1 L665.1 449.0 L666.1 447.3 L666.9 449.2 L667.5 448.1 L668.3 447.8 L668.9 448.0 L669.7 449.2 L670.3 448.0 L670.8 445.4 L671.3 448.3 L671.9 448.6 L672.9 449.4 L673.8 447.5 L674.5 449.0 L675.3 448.7 L676.2 446.7 L677.1 447.4 L677.9 448.3 L678.6 448.5 L679.4 449.2 L680.1 447.9 L680.7 449.3 L681.7 446.9 L682.6 447.6 L683.2 448.4 L684.2 449.5 L685.1 447.8 L685.6 444.7 L686.1 449.2 L687.1 448.1 L688.0 449.3 L688.7 448.0 L689.6 448.7 L690.3 448.8 L691.2 448.2 L691.9 447.3 L692.6 446.8 L693.6 449.5 L694.6 449.1 L695.1 445.7 L695.6 448.0" fill="none" stroke="#456bab" stroke-width="1.3" stroke-linejoin="round"/>
 <g font-size="10" fill="#222" stroke="#fff" stroke-width="1.5" stroke-opacity="0.8" paint-order="stroke" transform="translate(0,449.4) scale(1,1.0)">
  <text x="32.3" y="0">06:00</text>
  <text x="203.1" y="0">12:00</text>
  <text x="373.6" y="0">18:00</text>
  <text x="544.1" y="0">16. Oct</text>
 </g>
 <g>
  <rect x="11" y="427.5" width="7.3" height="13.7" fill="#555" stroke="#444" stroke-width="0.8" rx="0.5"/>
  <line x1="13.6" y1="430.8" x2="13.6" y2="438" stroke="#aaa" stroke-width="0.9"/>
  <line x1="15.7" y1="430.8" x2="15.7" y2="438" stroke="#aaa" stroke-width="0.9"/>
  <rect x="692.2" y="427.2" width="7.3" height="13.9" fill="#555" stroke="#444" stroke-width="0.8" rx="0.5"/>
  <line x1="694.8" y1="430.8" x2="694.8" y2="438" stroke="#aaa" stroke-width="0.9"/>
  <line x1="696.9" y1="430.8" x2="696.9" y2="438" stroke="#aaa" stroke-width="0.9"/>
 </g>
 <!-- legend -->
 <rect x="15" y="469" width="24" height="3" fill="#6d8fd4"/>
 <line x1="15" y1="482.5" x2="39" y2="482.5" stroke="#6d8fd4" stroke-width="1" stroke-dasharray="3.1 2.1"/>
 <line x1="15" y1="493" x2="39" y2="493" stroke="#6d8fd4" stroke-width="2" stroke-dasharray="3.2 2.1"/>
 <g font-size="9.87" fill="#7088d0">
  <text x="48.4" y="474.6">Server-Sud-Ouest - Poller - poller-master - Performance - cpu_usage_percent</text>
  <text x="48.4" y="485.6">Server-Sud-Ouest - Poller - poller-master - Performance - cpu_usage_percent_crit</text>
  <text x="48.4" y="496.5">Server-Sud-Ouest - Poller - poller-master - Performance - cpu_usage_percent_warn</text>
 </g>
</svg>
</body></html>
